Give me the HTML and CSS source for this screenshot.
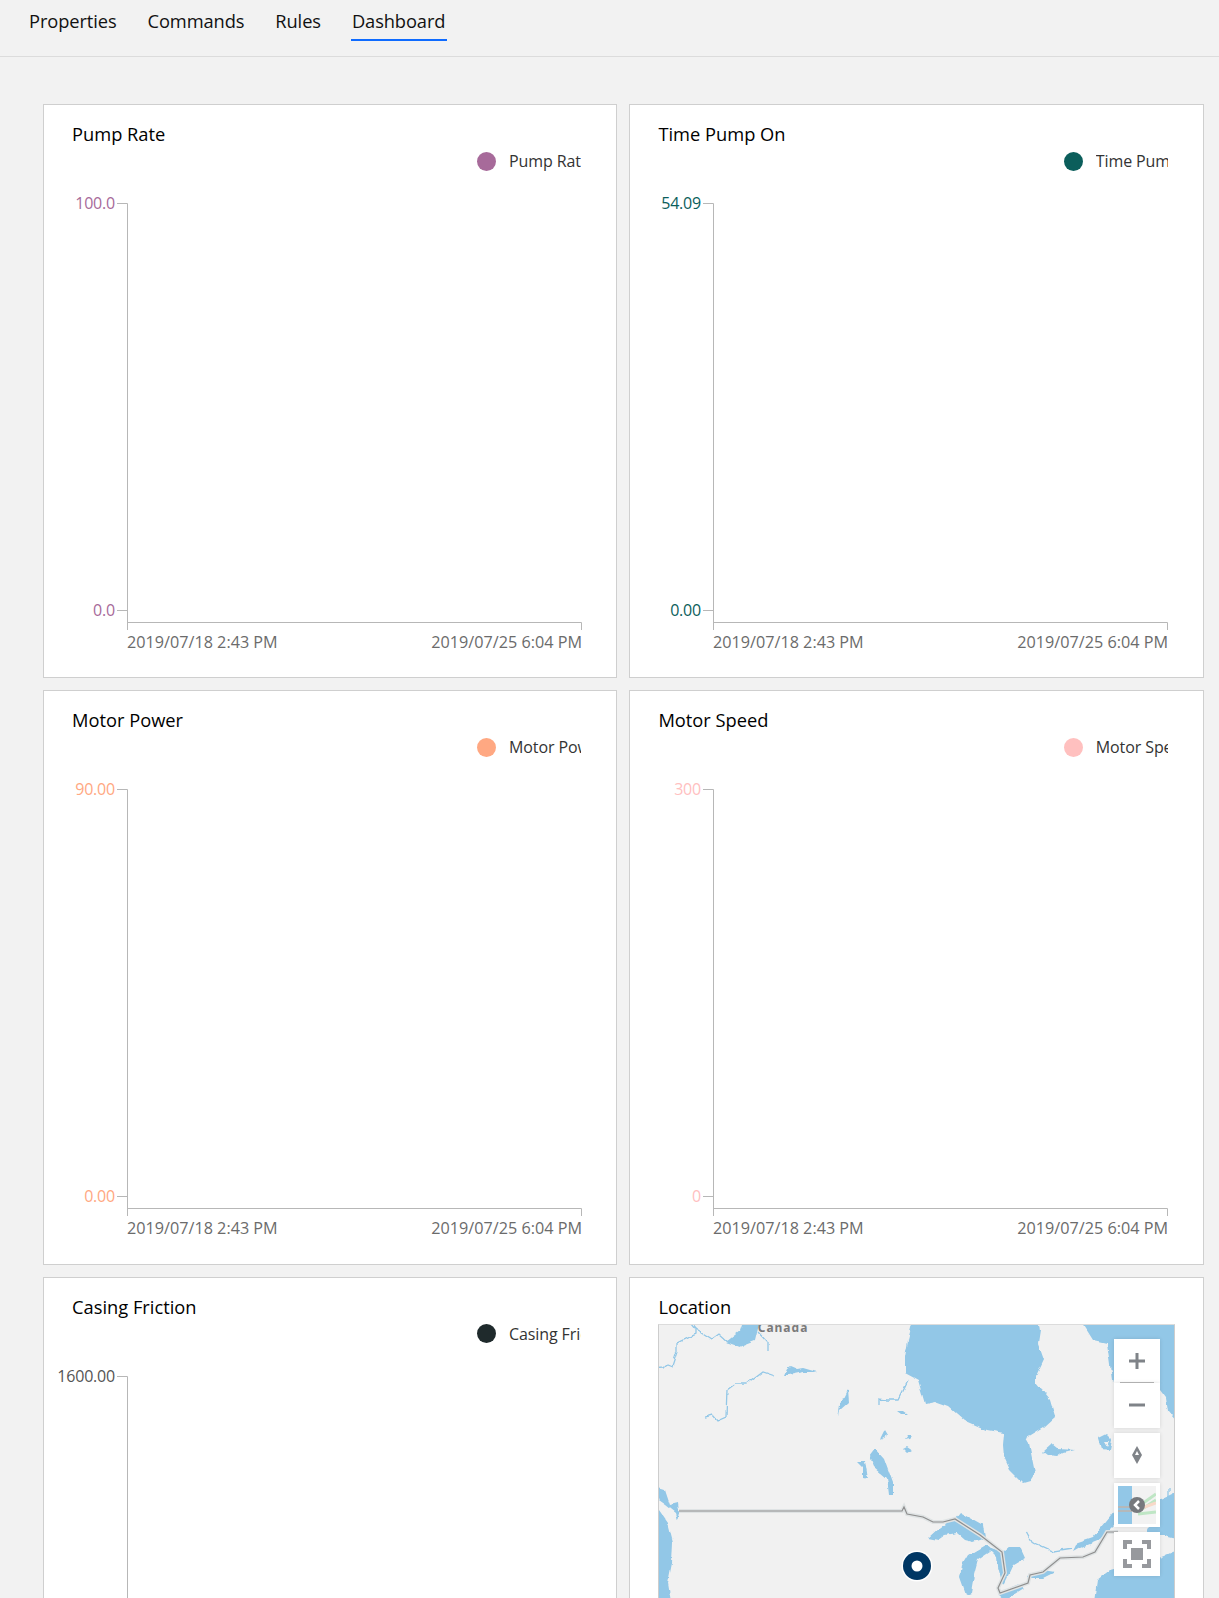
FILE: index.html
```html
<!DOCTYPE html>
<html lang="en">
<head>
  <meta charset="UTF-8">
  <title>Device Dashboard</title>
  <link rel="stylesheet" href="styles.css">
</head>
<body>
  <svg class="defs" width="0" height="0" aria-hidden="true">
    <symbol id="axes" viewBox="0 0 572 475">
      <path d="M73 13.5H83.5V440M73 420.5H83.5M83.5 432.5H537.5V440"/>
    </symbol>
    <!-- roughens the hand-drawn coastlines -->
    <filter id="coast" x="-5%" y="-5%" width="110%" height="110%">
      <feTurbulence type="fractalNoise" baseFrequency="0.09" numOctaves="3" seed="4"/>
      <feDisplacementMap in="SourceGraphic" scale="5" xChannelSelector="R" yChannelSelector="G"/>
      <feGaussianBlur stdDeviation="0.35"/>
    </filter>
  </svg>

  <nav class="tabs">
    <a class="tab">Properties</a>
    <a class="tab">Commands</a>
    <a class="tab">Rules</a>
    <a class="tab tab-active">Dashboard</a>
  </nav>

  <main class="dashboard">
    <section class="card pump">
      <h2 class="card-title">Pump Rate</h2>
      <div class="legend"><span class="legend-dot"></span><span class="legend-text">Pump Rate</span></div>
      <svg class="chart" width="572" height="475">
        <use class="axes" href="#axes"/>
        <text class="y-label" x="71" y="19">100.0</text>
        <text class="y-label" x="71" y="426">0.0</text>
        <text class="x-label" x="83" y="458">2019/07/18 2:43 PM</text>
        <text class="x-label x-end" x="538" y="458">2019/07/25 6:04 PM</text>
      </svg>
    </section>

    <section class="card time">
      <h2 class="card-title">Time Pump On</h2>
      <div class="legend"><span class="legend-dot"></span><span class="legend-text">Time Pump On</span></div>
      <svg class="chart" width="572" height="475">
        <use class="axes" href="#axes"/>
        <text class="y-label" x="71" y="19">54.09</text>
        <text class="y-label" x="71" y="426">0.00</text>
        <text class="x-label" x="83" y="458">2019/07/18 2:43 PM</text>
        <text class="x-label x-end" x="538" y="458">2019/07/25 6:04 PM</text>
      </svg>
    </section>

    <section class="card power">
      <h2 class="card-title">Motor Power</h2>
      <div class="legend"><span class="legend-dot"></span><span class="legend-text">Motor Power</span></div>
      <svg class="chart" width="572" height="475">
        <use class="axes" href="#axes"/>
        <text class="y-label" x="71" y="19">90.00</text>
        <text class="y-label" x="71" y="426">0.00</text>
        <text class="x-label" x="83" y="458">2019/07/18 2:43 PM</text>
        <text class="x-label x-end" x="538" y="458">2019/07/25 6:04 PM</text>
      </svg>
    </section>

    <section class="card speed">
      <h2 class="card-title">Motor Speed</h2>
      <div class="legend"><span class="legend-dot"></span><span class="legend-text">Motor Speed</span></div>
      <svg class="chart" width="572" height="475">
        <use class="axes" href="#axes"/>
        <text class="y-label" x="71" y="19">300</text>
        <text class="y-label" x="71" y="426">0</text>
        <text class="x-label" x="83" y="458">2019/07/18 2:43 PM</text>
        <text class="x-label x-end" x="538" y="458">2019/07/25 6:04 PM</text>
      </svg>
    </section>

    <section class="card friction">
      <h2 class="card-title">Casing Friction</h2>
      <div class="legend"><span class="legend-dot"></span><span class="legend-text">Casing Friction</span></div>
      <svg class="chart" width="572" height="475">
        <use class="axes" href="#axes"/>
        <text class="y-label" x="71" y="19">1600.00</text>
        <text class="y-label" x="71" y="426">0.00</text>
        <text class="x-label" x="83" y="458">2019/07/18 2:43 PM</text>
        <text class="x-label x-end" x="538" y="458">2019/07/25 6:04 PM</text>
      </svg>
    </section>

    <section class="card">
      <h2 class="card-title">Location</h2>
      <div class="map">
        <!-- viewBox uses the page coordinates of the map area -->
        <svg class="map-art" width="515" height="274" viewBox="659 1325 515 274">
          <g class="water">
            <path d="M914 1316L908 1340 905 1357 905 1373 918 1380 925 1404 935 1402 949 1407 964 1420 987 1430 1004 1433 1003 1445 1004 1457 1010 1470 1023 1483 1030 1481 1035 1473 1032 1458 1029 1443 1026 1438 1044 1427 1055 1417 1050 1400 1036 1383 1036 1377 1044 1360 1038 1343 1040 1330 1038 1316Z"/>
            <path d="M1078 1316L1093 1340 1107 1343 1112 1380 1160 1390 1166 1398 1168 1412 1176 1422 1186 1422 1186 1316Z"/>
            <path d="M726 1342L740 1347 755 1341 761 1316 745 1316 740 1331Z"/>
            <path d="M784 1375L787 1368 790 1366 797 1369 803 1368 817 1372 803 1372 788 1375Z"/>
            <path d="M838 1417L840 1405 848 1389 849 1402 840 1410Z"/>
            <path d="M898 1411L903 1411 907 1414 902 1414Z"/>
            <path d="M880 1440L885 1430 888 1435 884 1438ZM905 1440L908 1436 913 1436 910 1439ZM903 1448L907 1446 913 1450 908 1453Z"/>
            <path d="M870 1457L876 1449 884 1458 893 1483 893 1495 889 1495 887 1478 874 1467Z"/>
            <path d="M856 1460L865 1460 868 1479 863 1478 863 1467Z"/>
            <path d="M1043 1452L1052 1444 1057 1448 1075 1449 1063 1452 1057 1456 1047 1455Z"/>
            <path d="M1098 1438L1106 1434 1112 1440 1110 1450 1101 1449ZM1104 1441L1107 1446 1109 1441Z" fill-rule="evenodd"/>
            <path d="M648 1485L665 1490 670 1505 678 1503 679 1512 677 1520 675 1513 665 1505 648 1493Z"/>
            <path d="M648 1508L659 1510 668 1523 673 1543 672 1563 668 1583 672 1608 648 1608Z"/>
            <path d="M928 1538L940 1527 955 1518 960 1512 983 1525 985 1538 973 1542 965 1540 957 1533 945 1535 938 1540Z"/>
            <path d="M985 1545L993 1550 978 1560 974 1575 971 1592 966 1594 960 1577 962 1565 968 1555Z"/>
            <path d="M987 1547L1003 1553 1010 1547 1020 1547 1025 1558 1013 1565 1007 1578 1003 1586 998 1567 997 1557Z"/>
            <path d="M998 1594L1020 1585 1024 1588 1005 1600Z"/>
            <path d="M1027 1575L1043 1570 1055 1572 1043 1578 1028 1578Z"/>
            <path d="M1073 1552L1078 1542 1093 1537 1115 1510 1120 1520 1100 1540 1080 1548Z"/>
            <path d="M1146 1535L1160 1500 1186 1488 1186 1541 1160 1535Z"/>
            <path d="M1093 1608L1097 1580 1110 1570 1160 1557 1186 1546 1186 1608Z"/>
          </g>
          <g class="river">
            <path d="M650 1369L664 1368 667 1365 672 1367 677 1352 677 1343 695 1334 695 1328 687 1318"/>
            <path d="M695 1328L712 1339 719 1334 728 1342"/>
            <path d="M758 1332L768 1343 768 1351"/>
            <path d="M705 1417L712 1415 717 1421 726 1417 727 1390 735 1384 747 1384 763 1372 775 1376"/>
            <path d="M879 1405L879 1399 887 1400 898 1400 908 1380"/>
            <path d="M1027 1532L1033 1543 1053 1552 1072 1549"/>
            <path d="M1169 1500V1488"/>
          </g>
          <path class="border-halo" d="M679 1511H902L904 1507 907 1514 923 1517 933 1522 943 1522 955 1519 980 1535 1002 1552 1005 1573 998 1588 1000 1593 1028 1583 1030 1575 1043 1572 1060 1558 1083 1557 1095 1552 1107 1532H1118"/>
          <path class="border-line" d="M679 1511H902L904 1507 907 1514 923 1517 933 1522 943 1522 955 1519 980 1535 1002 1552 1005 1573 998 1588 1000 1593 1028 1583 1030 1575 1043 1572 1060 1558 1083 1557 1095 1552 1107 1532H1118"/>
          <text class="map-label" x="783" y="1332">Canada</text>
          <circle class="pin-ring" cx="917" cy="1566" r="15.5"/>
          <circle class="pin" cx="917" cy="1566" r="14"/>
          <circle class="pin-ring" cx="917" cy="1566" r="5.5"/>
        </svg>

        <div class="map-controls">
          <div class="zoom-group">
            <button class="map-btn map-btn-plus">
              <svg width="20" height="20" viewBox="0 0 20 20"><path class="glyph" d="M10 2V18M2 10H18"/></svg>
            </button>
            <button class="map-btn map-btn-minus">
              <svg width="20" height="20" viewBox="0 0 20 20"><path class="glyph" d="M2 10H18"/></svg>
            </button>
          </div>
          <button class="map-btn map-btn-compass">
            <svg width="12" height="20" viewBox="0 0 12 20"><path class="compass-body" d="M6 1L11 10 6 19 1 10Z"/><path class="compass-notch" d="M6 6L8 10H4Z"/></svg>
          </button>
          <button class="map-btn map-btn-style">
            <svg width="38" height="38" viewBox="0 0 38 38">
              <rect class="thumb-land" width="38" height="38"/>
              <rect class="thumb-water" width="14" height="38"/>
              <path class="thumb-border" d="M0 21H14M0 25H14"/>
              <path class="thumb-green" d="M21 20L38 8M21 25L38 14M20 28L38 26"/>
              <path class="thumb-peach" d="M21 23L38 17"/>
              <circle class="thumb-badge" cx="19" cy="19" r="8"/>
              <path class="thumb-chevron" d="M21 15L17 19 21 23"/>
            </svg>
          </button>
          <button class="map-btn map-btn-full">
            <svg width="28" height="28" viewBox="0 0 28 28">
              <path class="full-corners" d="M2 9V2H9M19 2H26V9M26 19V26H19M9 26H2V19"/>
              <rect class="full-square" x="8" y="8" width="12" height="12"/>
            </svg>
          </button>
        </div>
      </div>
    </section>
  </main>
</body>
</html>
```

FILE: styles.css
```css
:root {
  --page-bg: #f2f2f2;
  --line: #cfcfcf;
  --axis: #b7b7b7;
  --muted: #6b6b6b;
  --accent: #0f6bff;
  --water: #92c7e7;
  --land: #f1f1f1;
  --control: #7f8388;
}

html, body {
  height: 100%;
}

body {
  margin: 0;
  height: 1598px;
  overflow: hidden;
  background-color: var(--page-bg);
  color: #111;
  font-family: "Open Sans", "Noto Sans", sans-serif;
}

.defs {
  position: absolute;
}

/* Tabs */
.tabs {
  display: flex;
  gap: 29px;
  height: 56px;
  padding-left: 28px;
  border-bottom: 1px solid #dcdcdc;
}

.tab {
  height: 41px;
  padding: 0 1px;
  box-sizing: border-box;
  font-size: 18.3px;
  letter-spacing: -0.1px;
  line-height: 41px;
  color: #111;
  white-space: nowrap;
}

.tab-active {
  padding-right: 2px;
  border-bottom: 2px solid var(--accent);
}

/* Grid of cards */
.dashboard {
  display: grid;
  grid-template-columns: 574px 574.4px;
  grid-auto-rows: 574.4px;
  gap: 12px 12.4px;
  padding: 47px 0 0 43px;
}

.card {
  display: flex;
  flex-direction: column;
  padding-top: 14px;
  background: #fff;
  border: 1px solid var(--line);
  box-sizing: border-box;
  min-width: 0;
}

.card-title {
  margin: 0 0 2px 28px;
  font-size: 18.3px;
  font-weight: 400;
  line-height: 30px;
  color: #000;
}

.legend {
  display: flex;
  align-items: center;
  justify-content: flex-end;
  height: 20px;
  margin-right: 35px;
}

.legend-dot {
  width: 19px;
  height: 19px;
  margin-right: 13px;
  border-radius: 50%;
  background-color: var(--series);
}

.legend-text {
  width: 72px;
  overflow: hidden;
  font-size: 16px;
  letter-spacing: -0.1px;
  white-space: nowrap;
  color: #333;
}

.chart {
  display: block;
  margin-top: 19px;
  overflow: visible;
}

.axes {
  width: 572px;
  height: 475px;
  fill: none;
  stroke: var(--axis);
  stroke-width: 1;
}

.y-label {
  font-size: 16px;
  letter-spacing: -0.2px;
  text-anchor: end;
  fill: var(--series);
}

.x-label {
  font-size: 16.2px;
  fill: var(--muted);
}

.x-end {
  text-anchor: end;
}

/* Series colours */
.pump { --series: #a76a9a; }
.time { --series: #0b5e5b; }
.power { --series: #ffa882; }
.speed { --series: #ffc0bf; }
.friction { --series: #1f2a2c; }
.friction .y-label { fill: #555; }

/* Map */
.map {
  position: relative;
  height: 300px;
  margin: 0 27.5px;
  border: 1px solid #cdcdcd;
  border-top-color: #dcdcdc;
  background: var(--land);
  overflow: hidden;
}

.map-art {
  display: block;
}

.water {
  fill: var(--water);
  filter: url(#coast);
}

.river {
  fill: none;
  stroke: var(--water);
  stroke-width: 1.3;
  filter: url(#coast);
}

.border-halo {
  fill: none;
  stroke: #dfe3e4;
  stroke-width: 4;
}

.border-line {
  fill: none;
  stroke: #8e8e8e;
  stroke-width: 1.2;
}

.map-label {
  font-family: "Noto Sans", sans-serif;
  font-size: 12px;
  font-weight: 700;
  letter-spacing: 1px;
  text-anchor: middle;
  fill: #7a7a7a;
}

.pin {
  fill: #003764;
}

.pin-ring {
  fill: #fff;
}

.map-controls {
  position: absolute;
  top: 14px;
  right: 14px;
  display: flex;
  flex-direction: column;
  gap: 5px;
}

.zoom-group {
  display: flex;
  flex-direction: column;
}

.map-btn {
  position: relative;
  display: flex;
  align-items: center;
  justify-content: center;
  width: 46px;
  height: 45px;
  padding: 0;
  background: #fff;
  border: 0;
  box-shadow: 0 0 4px rgba(0, 0, 0, 0.12);
}

.glyph {
  fill: none;
  stroke: var(--control);
  stroke-width: 3;
}

.map-btn-plus {
  height: 44px;
}

/* short rule between zoom in and zoom out */
.map-btn-plus::after {
  content: "";
  position: absolute;
  left: 6px;
  right: 6px;
  bottom: 0;
  height: 1px;
  background: #b9b9b9;
}

.compass-body {
  fill: var(--control);
}

.compass-notch {
  fill: #fff;
}

.map-btn-style, .map-btn-full {
  height: 44px;
}

.thumb-land { fill: #f2f2f2; }
.thumb-water { fill: var(--water); }

.thumb-border {
  fill: none;
  stroke: #b4b8ba;
  stroke-width: 2;
}

.thumb-green {
  fill: none;
  stroke: #bfe6c5;
  stroke-width: 3;
}

.thumb-peach {
  fill: none;
  stroke: #f8d9c8;
  stroke-width: 3;
}

.thumb-badge { fill: #77797d; }

.thumb-chevron {
  fill: none;
  stroke: #fff;
  stroke-width: 2.5;
}

.full-corners {
  fill: none;
  stroke: #97999d;
  stroke-width: 4;
}

.full-square {
  fill: #97999d;
}
```
